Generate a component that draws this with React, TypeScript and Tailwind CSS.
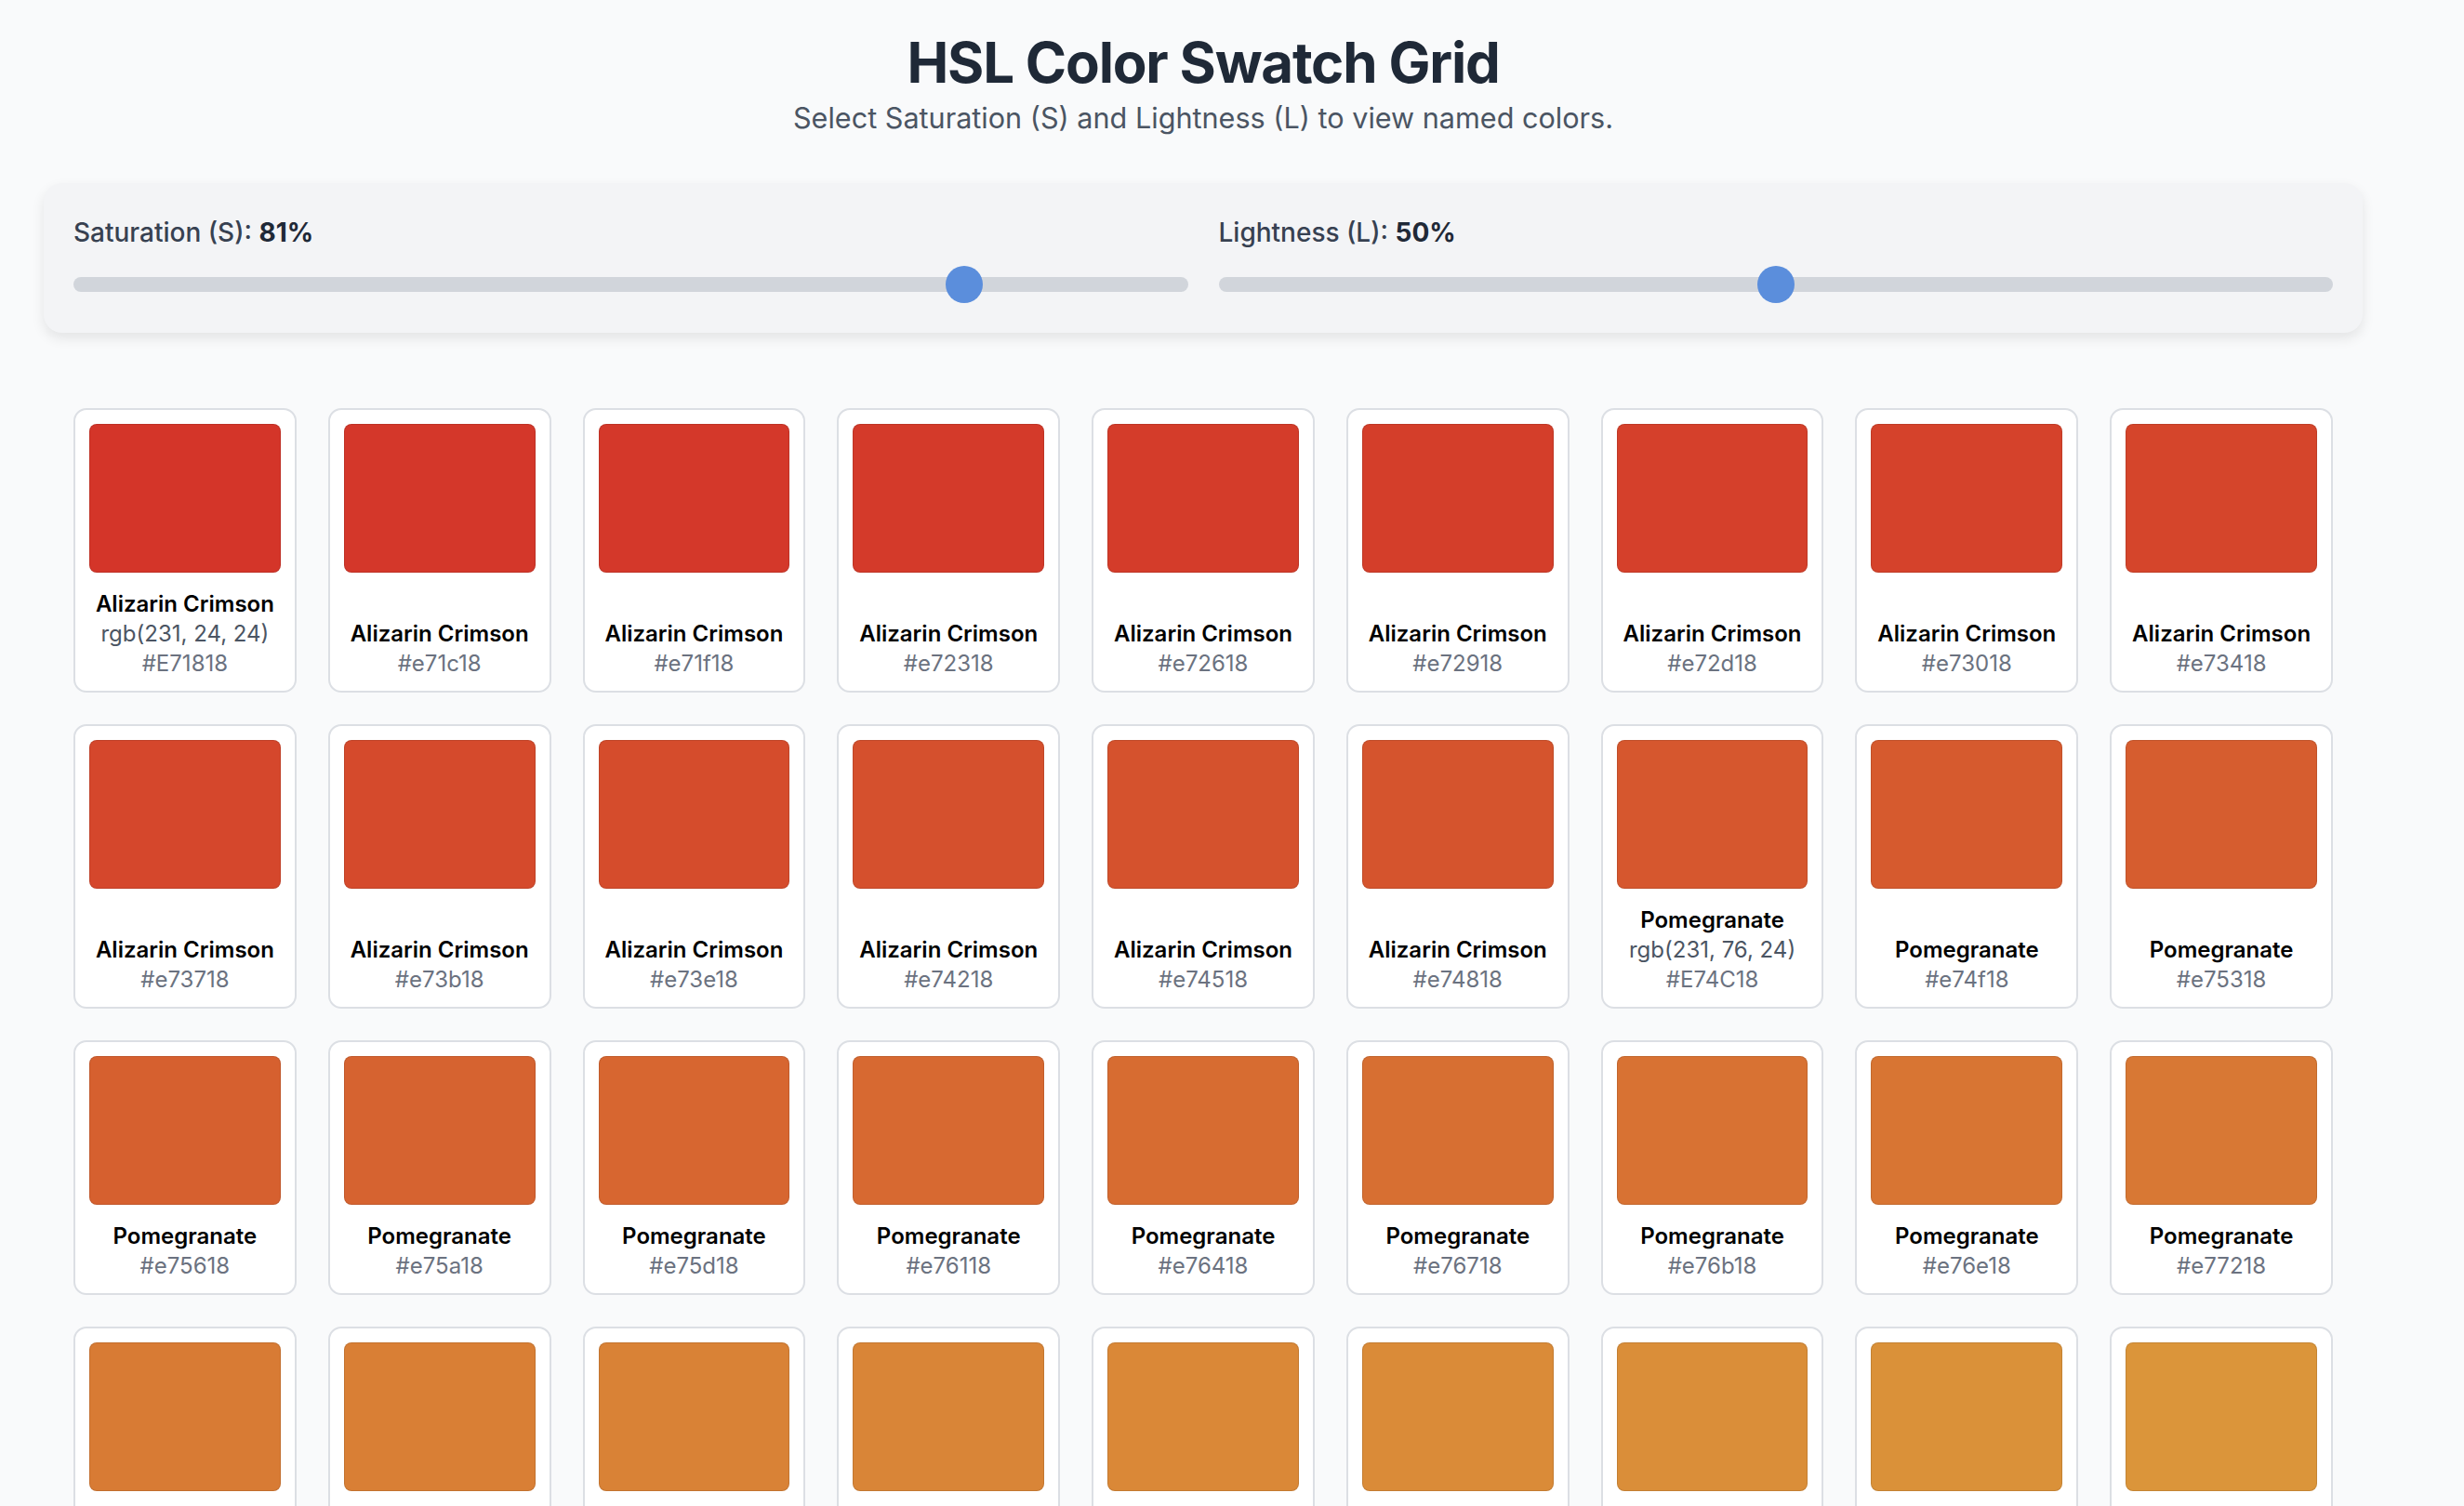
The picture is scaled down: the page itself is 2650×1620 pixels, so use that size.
import { useState } from 'react';

// anchor hues, each owns the 15 degrees that follow it
const NAMES: [number, string][] = [
  [0, "Alizarin Crimson"],
  [15, "Pomegranate"],
  [30, "Carrot"],
  [45, "Tangerine"],
  [60, "Sunflower"],
  [75, "Citrine"],
  [90, "Chartreuse"],
  [105, "Lime"],
  [120, "Emerald"],
  [135, "Jade"],
  [150, "Mint"],
  [165, "Turquoise"],
  [180, "Aqua"],
  [195, "Cerulean"],
  [210, "Azure"],
  [225, "Sapphire"],
  [240, "Cobalt"],
  [255, "Indigo"],
  [270, "Violet"],
  [285, "Amethyst"],
  [300, "Orchid"],
  [315, "Fuchsia"],
  [330, "Magenta"],
  [345, "Raspberry"],
];

function hslToRgb(h: number, s: number, l: number): [number, number, number] {
  const sat = s / 100;
  const lig = l / 100;
  const c = (1 - Math.abs(2 * lig - 1)) * sat;
  const x = c * (1 - Math.abs(((h / 60) % 2) - 1));
  const m = lig - c / 2;
  let r = 0, g = 0, b = 0;
  if (h < 60) [r, g, b] = [c, x, 0];
  else if (h < 120) [r, g, b] = [x, c, 0];
  else if (h < 180) [r, g, b] = [0, c, x];
  else if (h < 240) [r, g, b] = [0, x, c];
  else if (h < 300) [r, g, b] = [x, 0, c];
  else [r, g, b] = [c, 0, x];
  return [Math.round((r + m) * 255), Math.round((g + m) * 255), Math.round((b + m) * 255)];
}

const hex = (n: number) => n.toString(16).padStart(2, "0");

// the reference was captured on a wide-gamut screen, so nudge sRGB into P3 numbers
const toLin = (c: number) => (c <= 0.04045 ? c / 12.92 : ((c + 0.055) / 1.055) ** 2.4);
const toGam = (c: number) => (c <= 0.0031308 ? 12.92 * c : 1.055 * c ** (1 / 2.4) - 0.055);
function shown([r, g, b]: [number, number, number]) {
  const [lr, lg, lb] = [r, g, b].map((v) => toLin(v / 255));
  const pr = 0.8225 * lr + 0.1774 * lg;
  const pg = 0.0332 * lr + 0.9669 * lg;
  const pb = 0.0171 * lr + 0.0724 * lg + 0.9108 * lb;
  const out = [pr, pg, pb].map((v) => Math.round(Math.min(1, Math.max(0, toGam(v))) * 255));
  return `rgb(${out[0]}, ${out[1]}, ${out[2]})`;
}

function Slider({ label, value, onChange }: { label: string; value: number; onChange: (v: number) => void }) {
  return (
    <div className="flex flex-col">
      <label className="text-[28px] leading-[42px] font-medium text-[#374151]">
        {label}: <span className="font-bold text-[#1f2937]">{value}%</span>
      </label>
      <div className="mt-[15px] flex h-10 items-center">
        <input
          type="range"
          min={0}
          max={100}
          value={value}
          onChange={(e) => onChange(Number(e.target.value))}
          className="h-4 w-full cursor-pointer appearance-none rounded-full bg-[#d1d5db] outline-none [&::-webkit-slider-thumb]:h-10 [&::-webkit-slider-thumb]:w-10 [&::-webkit-slider-thumb]:appearance-none [&::-webkit-slider-thumb]:rounded-full [&::-webkit-slider-thumb]:border-0 [&::-webkit-slider-thumb]:bg-[#5b8edc]"
        />
      </div>
    </div>
  );
}

export default function App() {
  const [sat, setSat] = useState(81);
  const [light, setLight] = useState(50);

  const swatches = Array.from({ length: 360 }, (_, h) => {
    const anchor = NAMES.filter(([start]) => start <= h).pop()!;
    const rgb = hslToRgb(h, sat, light);
    const code = `#${hex(rgb[0])}${hex(rgb[1])}${hex(rgb[2])}`;
    return { h, name: anchor[1], exact: anchor[0] === h, rgb, code };
  });

  return (
    <div className="min-h-screen bg-[#f9fafb] pl-[47px] pt-[34px] pb-16 font-['Inter','Noto_Sans',sans-serif]">
      <div className="w-[2494px]">
        {/* Header */}
        <header className="text-center">
          <h1 className="text-[60px] leading-[66px] font-bold tracking-[-0.02em] text-[#1f2937]">HSL Color Swatch Grid</h1>
          <p className="mt-1 text-[30.6px] leading-[45px] text-[#4b5563]">
            Select Saturation (S) and Lightness (L) to view named colors.
          </p>
        </header>

        {/* Controls */}
        <div className="mt-12 grid grid-cols-2 gap-x-[33px] rounded-[20px] bg-[#f3f4f6] p-8 shadow-[0_6px_14px_rgba(0,0,0,0.09)]">
          <Slider label="Saturation (S)" value={sat} onChange={setSat} />
          <Slider label="Lightness (L)" value={light} onChange={setLight} />
        </div>

        {/* Swatches */}
        <div className="mt-[81px] grid grid-cols-9 gap-[34px] px-8">
          {swatches.map((s) => (
            <div key={s.h} className="flex flex-col rounded-[14px] border-2 border-[#dcdfe4] bg-white p-[15px] pb-[13px]">
              <div
                className="h-[160px] rounded-[8px] border border-black/10"
                style={{ backgroundColor: shown(s.rgb) }}
              />
              <div className="mt-auto pt-[18px] text-center text-[24px] leading-[32px]">
                <div className="font-semibold text-black">{s.name}</div>
                {s.exact && (
                  <div className="text-[#4b5563]">
                    rgb({s.rgb[0]}, {s.rgb[1]}, {s.rgb[2]})
                  </div>
                )}
                <div className="text-[#6b7280]">{s.exact ? s.code.toUpperCase() : s.code}</div>
              </div>
            </div>
          ))}
        </div>
      </div>
    </div>
  );
}
